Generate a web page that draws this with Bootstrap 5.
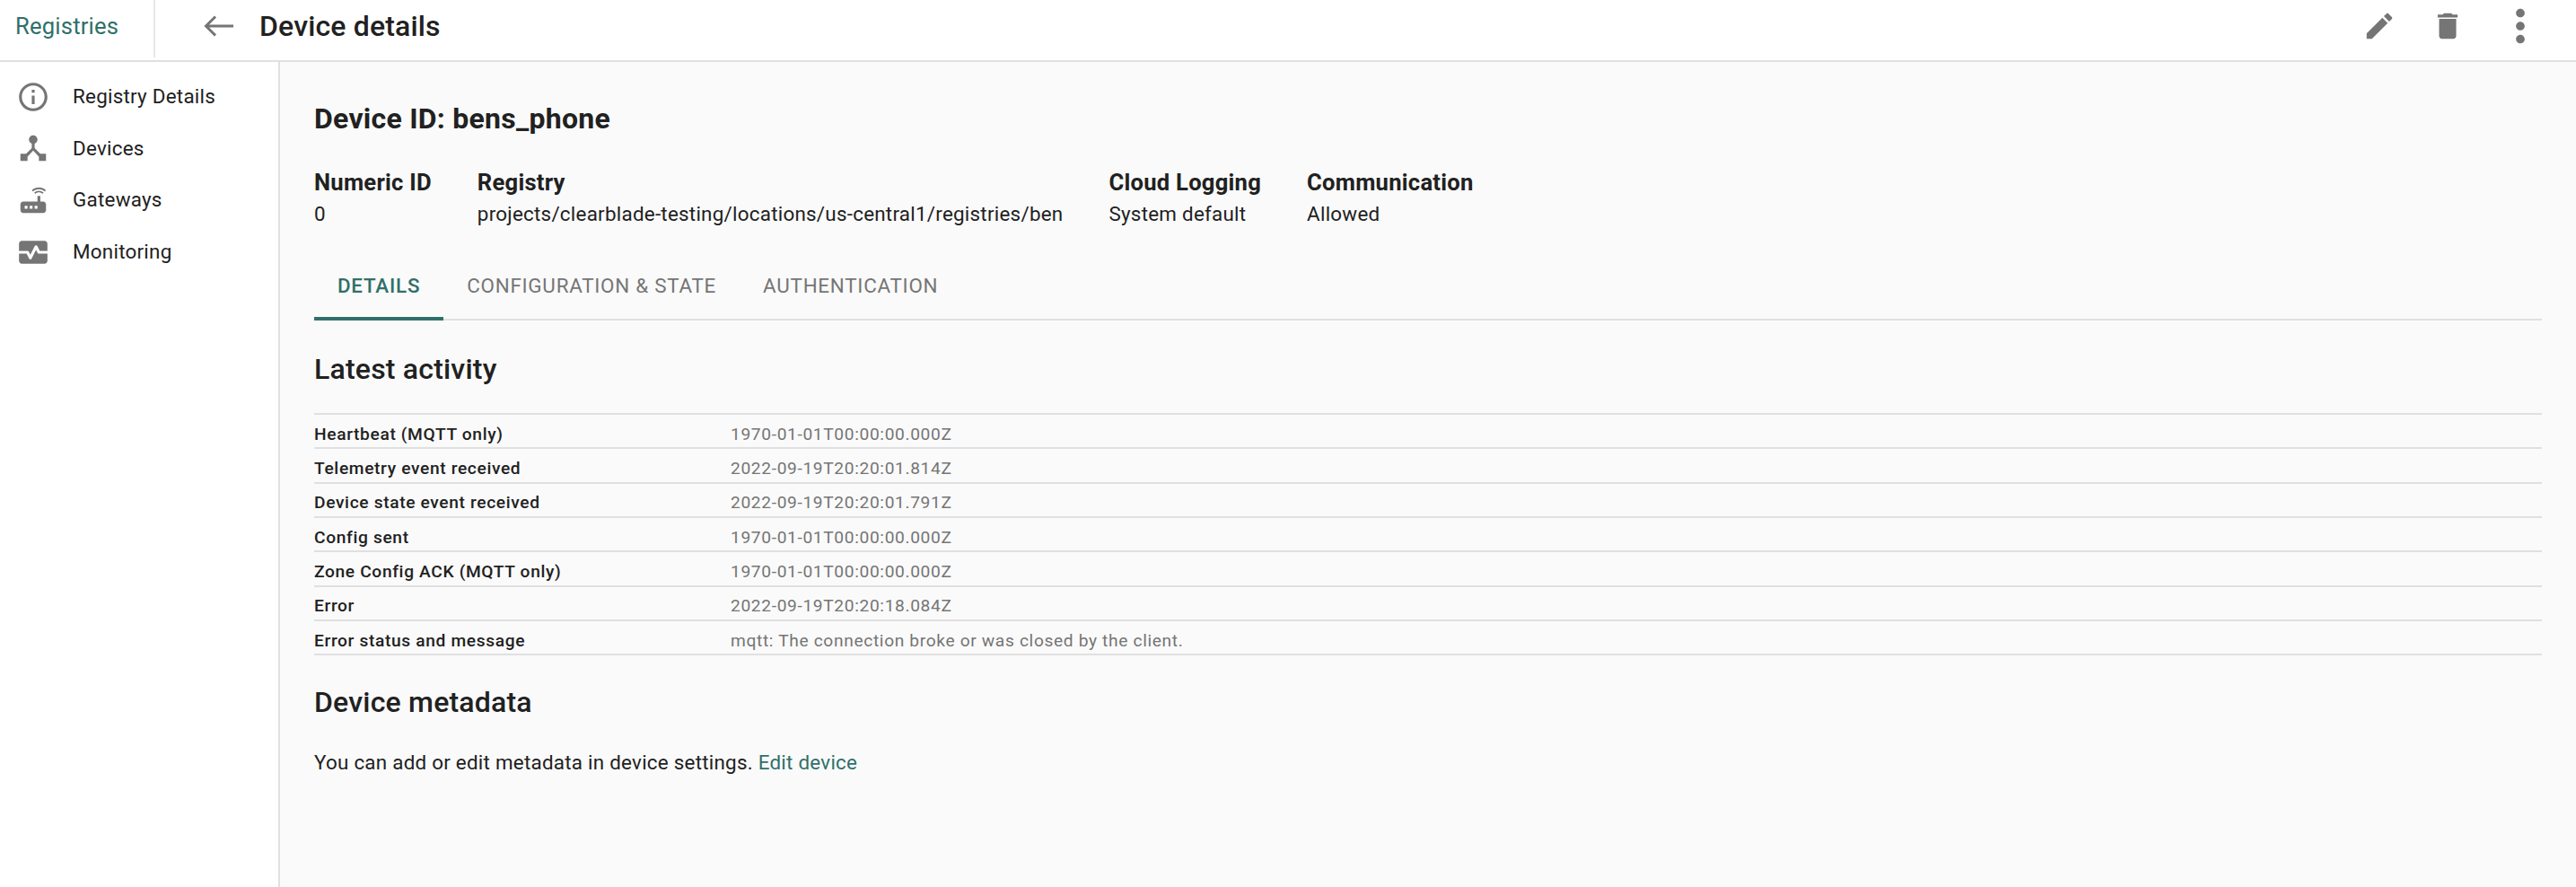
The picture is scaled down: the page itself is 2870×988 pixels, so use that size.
<!DOCTYPE html>
<html lang="en">
<head>
<meta charset="utf-8">
<title>Device details</title>
<link href="https://cdn.jsdelivr.net/npm/bootstrap@5.3.0/dist/css/bootstrap.min.css" rel="stylesheet">
<style>
body{font-family:Roboto,"Liberation Sans",sans-serif;color:#212121;background:#fff;overflow:hidden}
svg{fill:#757575;display:block;flex:none}
.top-bar{height:69px;border-bottom:2px solid #e0e0e0;background:#fff;padding-bottom:9px}
.brand-cell{width:173px;height:64px;border-right:2px solid #e8e8e8;padding-left:17px;font-size:25.6px;line-height:58px;letter-spacing:.2px;color:#30706a;text-decoration:none;align-self:flex-start}
.back-cell{margin-left:50px;margin-right:28px}
.page-title{font-size:32px;font-weight:500;line-height:56px;margin:0;letter-spacing:.15px}
.acts{margin-right:33px}
.act-edit{margin-right:38px}
.act-del{margin-right:33px}
.side{width:312px;border-right:2px solid #e0e0e0;background:#fff;padding-top:10px}
.side a{height:57.6px;display:flex;align-items:center;padding-left:18px;gap:25px;color:#212121;font-size:22.4px;letter-spacing:.25px;text-decoration:none;border:0;background:none}
.main-area{background:#fafafa;padding:44px 38px 0;min-width:0}
.dev-id{font-size:32px;font-weight:700;line-height:38px;margin:0;letter-spacing:.25px}
.facts{margin-top:36px;gap:51px}
.facts b{display:block;font-size:25.6px;font-weight:700;line-height:32px;letter-spacing:.25px}
.facts span{display:block;font-size:22.4px;line-height:32px;margin-top:3px;letter-spacing:.25px;white-space:nowrap}
.tabs-line{margin-top:26px;height:77px;border-bottom:2px solid #e0e0e0;gap:0}
.tabs-line .nav-link{height:77px;padding:0 26px;font-size:22.4px;font-weight:400;line-height:77px;color:#757575;letter-spacing:.75px;border-radius:0;border:0}
.tabs-line .nav-link.active{color:#30706a;border-bottom:4px solid #30706a;font-weight:500;background:none}
.sect-h{font-size:32px;font-weight:500;line-height:36px;margin:36px 0 0;letter-spacing:.2px}
.sect-h.second{margin-top:34px}
.act-table{margin:31px 0 0;font-size:19.2px;border-top:2px solid #e0e0e0;--bs-table-bg:transparent;table-layout:fixed;width:100%}
.act-table th,.act-table td{height:38.33px;padding:7px 0 0;border-bottom:2px solid #e0e0e0;line-height:28px;letter-spacing:.64px;vertical-align:middle}
.act-table th{width:464px;font-weight:500;color:#212121}
.act-table td{color:#757575}
.meta-p{font-size:22.4px;line-height:32px;margin:33px 0 0;letter-spacing:.25px}
.meta-p a{color:#30706a;text-decoration:none}
</style>
</head>
<body>
<div class="vh-100 d-flex flex-column">
  <header class="top-bar d-flex align-items-center">
    <a class="brand-cell" href="#">Registries</a>
    <div class="back-cell">
      <svg width="38" height="38" viewBox="0 0 38 38"><path d="M37 19H7M17 8.500 6.500 19 17 29.500" fill="none" stroke="#757575" stroke-width="3"/></svg>
    </div>
    <h1 class="page-title">Device details</h1>
    <div class="acts d-flex align-items-center ms-auto">
      <svg class="act-edit" width="38" height="38" viewBox="0 0 24 24"><path d="M3 17.250V21h3.750L17.810 9.940l-3.750-3.750L3 17.250zM20.710 7.040c.39-.39.39-1.020 0-1.410l-2.340-2.340c-.39-.39-1.020-.39-1.410 0l-1.830 1.830 3.750 3.750 1.830-1.830z"/></svg>
      <svg class="act-del" width="38" height="38" viewBox="0 0 24 24"><path d="M6 19c0 1.100.9 2 2 2h8c1.100 0 2-.9 2-2V7H6v12zM19 4h-3.500l-1-1h-5l-1 1H5v2h14V4z"/></svg>
      <svg width="58" height="58" viewBox="0 0 24 24"><path d="M12 8c1.100 0 2-.9 2-2s-.9-2-2-2-2 .9-2 2 .9 2 2 2zm0 2c-1.100 0-2 .9-2 2s.9 2 2 2 2-.9 2-2-.9-2-2-2zm0 6c-1.100 0-2 .9-2 2s.9 2 2 2 2-.9 2-2-.9-2-2-2z"/></svg>
    </div>
  </header>
  <div class="d-flex flex-grow-1">
    <nav class="side list-group list-group-flush flex-shrink-0">
      <a class="list-group-item" href="#"><svg width="38" height="38" viewBox="0 0 24 24"><path d="M11 7h2v2h-2zm0 4h2v6h-2zm1-9C6.480 2 2 6.480 2 12s4.480 10 10 10 10-4.480 10-10S17.520 2 12 2zm0 18c-4.410 0-8-3.590-8-8s3.590-8 8-8 8 3.590 8 8-3.590 8-8 8z"/></svg>Registry Details</a>
      <a class="list-group-item" href="#"><svg width="38" height="38" viewBox="0 0 24 24"><path d="M17 16l-4-4V8.820C14.160 8.400 15 7.300 15 6c0-1.660-1.340-3-3-3S9 4.340 9 6c0 1.300.84 2.400 2 2.820V12l-4 4H3v5h5v-3.050l4-4.200 4 4.200V21h5v-5h-4z"/></svg>Devices</a>
      <a class="list-group-item" href="#"><svg width="38" height="38" viewBox="0 0 24 24"><path d="M20.200 5.900l.8-.8C19.600 3.700 17.800 3 16 3s-3.600.7-5 2.100l.8.8C13 4.800 14.500 4.200 16 4.200s3 .6 4.200 1.700zm-.9.8c-.9-.9-2.100-1.400-3.300-1.400s-2.400.5-3.300 1.400l.8.8c.7-.7 1.600-1 2.500-1 .9 0 1.800.3 2.500 1l.8-.8zM19 13h-2V9h-2v4H5c-1.100 0-2 .9-2 2v4c0 1.100.9 2 2 2h14c1.100 0 2-.9 2-2v-4c0-1.100-.9-2-2-2zM8 18H6v-2h2v2zm3.500 0h-2v-2h2v2zm3.500 0h-2v-2h2v2z"/></svg>Gateways</a>
      <a class="list-group-item" href="#"><svg width="38" height="38" viewBox="0 0 24 24"><path d="M15.110 12.450L14 10.240l-3.110 6.210c-.16.34-.51.55-.89.55s-.73-.21-.89-.55L7.380 13H2v5c0 1.100.9 2 2 2h16c1.100 0 2-.9 2-2v-5h-6c-.38 0-.73-.21-.89-.55zM20 4H4c-1.100 0-2 .9-2 2v5h6c.38 0 .73.21.89.55L10 13.760l3.110-6.210c.34-.68 1.450-.68 1.790 0L16.620 11H22V6c0-1.100-.9-2-2-2z"/></svg>Monitoring</a>
    </nav>
    <main class="main-area flex-grow-1">
      <h2 class="dev-id">Device ID: bens_phone</h2>
      <div class="facts d-flex">
        <div><b>Numeric ID</b><span>0</span></div>
        <div><b>Registry</b><span>projects/clearblade-testing/locations/us-central1/registries/ben</span></div>
        <div><b>Cloud Logging</b><span>System default</span></div>
        <div><b>Communication</b><span>Allowed</span></div>
      </div>
      <ul class="nav tabs-line">
        <li class="nav-item"><a class="nav-link active" href="#">DETAILS</a></li>
        <li class="nav-item"><a class="nav-link" href="#">CONFIGURATION &amp; STATE</a></li>
        <li class="nav-item"><a class="nav-link" href="#">AUTHENTICATION</a></li>
      </ul>
      <h3 class="sect-h">Latest activity</h3>
      <table class="act-table">
        <tbody>
          <tr><th>Heartbeat (MQTT only)</th><td>1970-01-01T00:00:00.000Z</td></tr>
          <tr><th>Telemetry event received</th><td>2022-09-19T20:20:01.814Z</td></tr>
          <tr><th>Device state event received</th><td>2022-09-19T20:20:01.791Z</td></tr>
          <tr><th>Config sent</th><td>1970-01-01T00:00:00.000Z</td></tr>
          <tr><th>Zone Config ACK (MQTT only)</th><td>1970-01-01T00:00:00.000Z</td></tr>
          <tr><th>Error</th><td>2022-09-19T20:20:18.084Z</td></tr>
          <tr><th>Error status and message</th><td>mqtt: The connection broke or was closed by the client.</td></tr>
        </tbody>
      </table>
      <h3 class="sect-h second">Device metadata</h3>
      <p class="meta-p">You can add or edit metadata in device settings. <a href="#">Edit device</a></p>
    </main>
  </div>
</div>
<script src="https://cdn.jsdelivr.net/npm/bootstrap@5.3.0/dist/js/bootstrap.bundle.min.js"></script>
</body>
</html>
